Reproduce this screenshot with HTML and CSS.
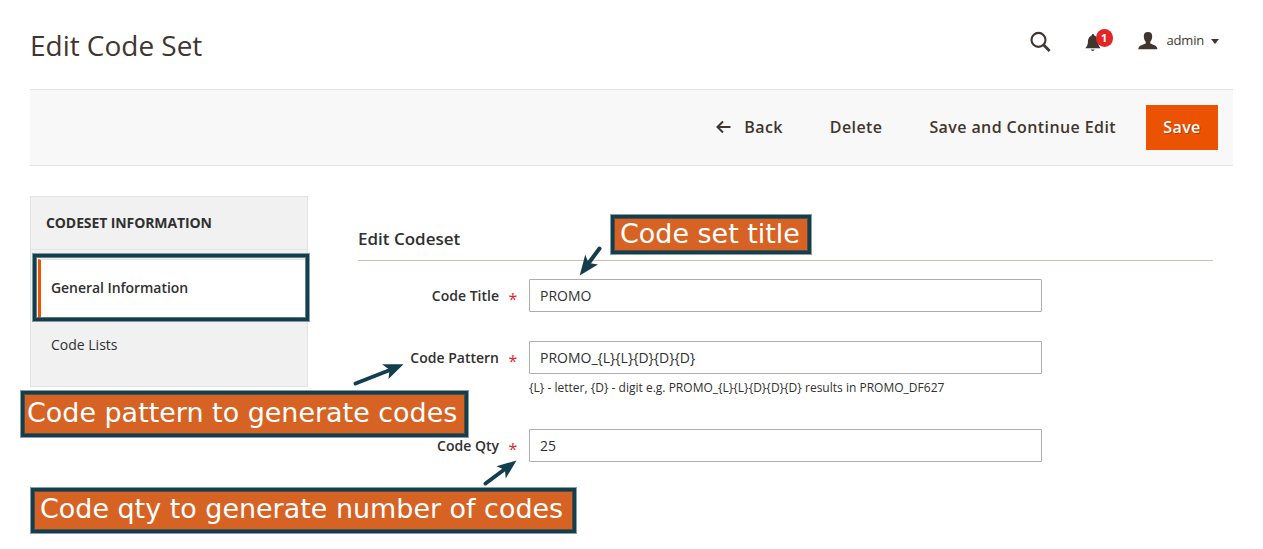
FILE: index.html
```html
<!DOCTYPE html>
<html lang="en">
<head>
<meta charset="utf-8">
<title>Edit Code Set</title>
<link rel="stylesheet" href="styles.css">
</head>
<body>
<div class="page">
  <header class="header">
    <h1 class="title">Edit Code Set</h1>
    <div class="tools">
      <svg class="search" width="22" height="22" viewBox="0 0 22 22"><circle cx="8.5" cy="8.9" r="7" fill="none" stroke="#41362f" stroke-width="2.1"/><path d="M13.5 13.8L19.6 20" stroke="#41362f" stroke-width="2.8"/></svg>
      <div class="bell">
        <svg width="16" height="18" viewBox="0 0 16 18"><path d="M8 0C8.8 0 9.2.7 9.3 1.4C12 2.3 13 4.5 13 7C13 10.5 14 12.5 15.5 14.2H.3C2 12.5 3 10.5 3 7C3 4.5 4.2 2.3 6.7 1.4C6.8.7 7.2 0 8 0ZM5.8 15.6H9.7C9.4 17.3 6.1 17.3 5.8 15.6Z" fill="#41362f"/></svg>
        <span class="badge">1</span>
      </div>
      <div class="account">
        <svg width="20" height="18" viewBox="0 0 20 18"><path d="M10 0C13 0 14.2 1.5 14.2 4.3C14.2 6.8 13.3 8.6 12.3 9.8V11.5C14 12.5 19.4 13 19.4 17.3H.3C.3 13 6 12.5 7.7 11.5V9.8C6.7 8.6 5.8 6.8 5.8 4.3C5.8 1.5 7 0 10 0Z" fill="#41362f"/></svg>
        <span class="name">admin</span>
        <svg class="caret" width="8" height="5" viewBox="0 0 8 5"><path d="M0 0H8L4 5Z" fill="#41362f"/></svg>
      </div>
    </div>
  </header>
  <div class="actions">
    <button class="action back"><svg width="15" height="14" viewBox="0 0 15 14"><path d="M7 1.5L1.5 7L7 12.5M1.8 7H14.5" fill="none" stroke="#41362f" stroke-width="2"/></svg><span>Back</span></button>
    <button class="action">Delete</button>
    <button class="action">Save and Continue Edit</button>
    <button class="action primary">Save</button>
  </div>
  <div class="content">
    <nav class="sidebar">
      <div class="sidebar-title">CODESET INFORMATION</div>
      <a class="tab current">General Information</a>
      <a class="tab">Code Lists</a>
    </nav>
    <main class="form">
      <h2 class="legend">Edit Codeset</h2>
      <div class="field"><label class="label">Code Title</label><span class="star">*</span><div class="input">PROMO</div></div>
      <div class="field"><label class="label">Code Pattern</label><span class="star">*</span><div class="input">PROMO_{L}{L}{D}{D}{D}</div></div>
      <div class="note">{L} - letter, {D} - digit e.g. PROMO_{L}{L}{D}{D}{D} results in PROMO_DF627</div>
      <div class="field"><label class="label">Code Qty</label><span class="star">*</span><div class="input">25</div></div>
    </main>
  </div>
</div>
<div class="outline"></div>
<div class="callout callout-title">Code set title</div>
<div class="callout callout-pattern">Code pattern to generate codes</div>
<div class="callout callout-qty">Code qty to generate number of codes</div>
<svg class="arrows" width="1263" height="549" viewBox="0 0 1263 549">
  <g stroke="#123e4e" stroke-width="4" stroke-linecap="round">
    <path d="M599.5 248.5L588 264"/><path d="M355.5 383.5L390 370"/><path d="M485.5 483.5L505 469"/>
  </g>
  <g fill="#123e4e">
    <path d="M579.7 275.5L585.2 254.7L588.7 263L598 264.5Z"/>
    <path d="M403.5 364.3L382 364.3L389.5 369.8L388.5 379Z"/>
    <path d="M516.5 460.5L496.5 466.2L505 470L505.7 478.5Z"/>
  </g>
</svg>
</body>
</html>
```
FILE: styles.css
```css
* { box-sizing: border-box; }
body { margin: 0; background: #fff; color: #303030; font-family: "Open Sans", sans-serif; font-size: 14px; height: 549px; overflow: hidden; position: relative; }
.page { padding: 0 30px; }
.header { height: 89px; display: flex; justify-content: space-between; align-items: flex-start; }
.title { margin: 26px 0 0; font-size: 28px; line-height: 38px; font-weight: 400; letter-spacing: -.03px; color: #41362f; }
.tools { display: flex; align-items: flex-start; padding: 31px 14px 0 0; }
.search { margin-right: 33px; }
.bell { position: relative; width: 16px; margin: 3px 37px 0 0; }
.bell svg, .account svg { display: block; }
.badge { position: absolute; left: 11px; top: -5px; width: 17px; height: 18px; border-radius: 9px; background: #e22626; color: #fff; font-size: 11px; line-height: 18px; font-weight: 700; text-align: center; }
.account { display: flex; align-items: center; height: 20px; font-size: 13px; line-height: 18px; color: #41362f; }
.name { margin: 0 7px 2px 9px; letter-spacing: -.2px; }
.actions { height: 77px; background: #f8f8f8; border: solid #e3e3e3; border-width: 1px 0; display: flex; justify-content: flex-end; align-items: center; padding-right: 15px; }
.action { border: 0; background: none; height: 45px; padding: 0 0 2px; margin-right: 47px; font: 600 16px/24px "Open Sans", sans-serif; letter-spacing: .4px; color: #41362f; display: flex; align-items: center; }
.action:nth-child(3) { margin-right: 30px; }
.back svg { margin-right: 13px; }
.action.primary { margin: 0; width: 72px; justify-content: center; background: #eb5202; color: #fff; text-shadow: 1px 1px 0 rgba(0,0,0,.25); }
.content { display: flex; padding-top: 30px; }
.sidebar { width: 278px; height: 191px; background: #f1f1f1; border: 1px solid #e3e3e3; }
.sidebar-title { height: 53px; padding-left: 15px; border-bottom: 1px solid #e3e3e3; font-weight: 700; line-height: 52px; margin-bottom: 9px; letter-spacing: -.1px; }
.tab { display: block; height: 56px; padding-left: 20px; line-height: 56px; }
.tab.current { height: 59px; margin: 0 0 -1px 7px; padding-left: 10px; line-height: 55px; font-weight: 600; letter-spacing: -.05px; background: #fff; border: solid #e3e3e3; border-width: 1px 0; border-left: 3px solid #eb5202; }
.form { margin-left: 50px; width: 855px; }
.legend { height: 65px; margin: 0 0 18px; padding-top: 31px; border-bottom: 1px solid #cac3b4; font-size: 17px; line-height: 24px; font-weight: 600; }
.field { display: flex; height: 33px; margin-bottom: 29px; }
.label { width: 141px; text-align: right; font-weight: 600; line-height: 33px; }
.star { width: 30px; padding: 4px 0 0 9.5px; color: #e22626; font-size: 16px; line-height: 33px; }
.input { width: 513px; border: 1px solid #adadad; border-radius: 1px; padding-left: 10px; line-height: 32px; }
.note { margin: -24px 0 33px 171px; font-size: 12px; line-height: 17px; height: 17px; letter-spacing: .01px; }
.outline, .callout { position: absolute; border: 3px solid #123e4e; box-shadow: 0 0 0 1px rgba(18,62,78,.5), inset 0 0 0 1px rgba(18,62,78,.65); }
.outline { left: 33px; top: 254px; width: 276px; height: 67px; }
.callout { background: #d66324; color: #fff; font-family: "DejaVu Sans", sans-serif; font-size: 26.95px; line-height: 32px; white-space: nowrap; }
.callout-title { left: 611px; top: 215px; width: 200px; height: 39px; padding-left: 6px; }
.callout-pattern { left: 21px; top: 391px; width: 447px; height: 46px; padding: 3px 0 0 3px; }
.callout-qty { left: 31px; top: 488px; width: 545px; height: 45px; padding: 2px 0 0 6px; }
.arrows { position: absolute; left: 0; top: 0; }
```
